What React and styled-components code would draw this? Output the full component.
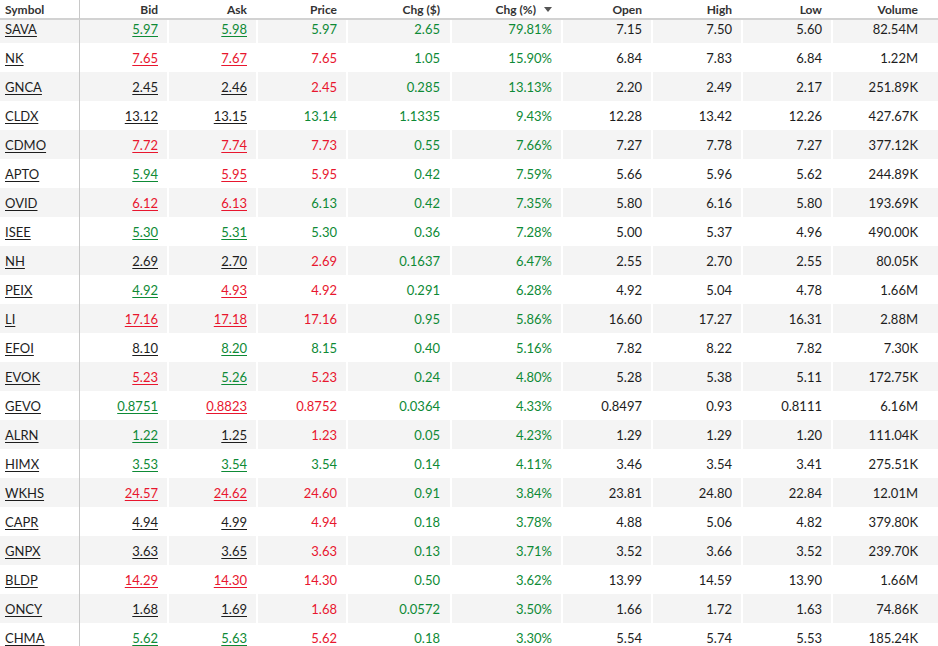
import React, { useLayoutEffect, useRef } from "react"
import styled, { createGlobalStyle } from "styled-components"

const GREEN = "#0e8a36"
const RED = "#e8162e"
const INK = "#1d1d1d"

const GlobalStyle = createGlobalStyle`
  html, body {
    margin: 0;
    padding: 0;
    background: #fff;
  }
  body {
    font-family: Lato, "Open Sans", sans-serif;
    color: ${INK};
  }
`

// g = green, r = red, k = black
const rows = [
  ["SAVA", "5.97", "g", "5.98", "g", "5.97", "g", "2.65", "79.81%", "7.15", "7.50", "5.60", "82.54M"],
  ["NK", "7.65", "r", "7.67", "r", "7.65", "r", "1.05", "15.90%", "6.84", "7.83", "6.84", "1.22M"],
  ["GNCA", "2.45", "k", "2.46", "k", "2.45", "r", "0.285", "13.13%", "2.20", "2.49", "2.17", "251.89K"],
  ["CLDX", "13.12", "k", "13.15", "k", "13.14", "g", "1.1335", "9.43%", "12.28", "13.42", "12.26", "427.67K"],
  ["CDMO", "7.72", "r", "7.74", "r", "7.73", "r", "0.55", "7.66%", "7.27", "7.78", "7.27", "377.12K"],
  ["APTO", "5.94", "g", "5.95", "r", "5.95", "r", "0.42", "7.59%", "5.66", "5.96", "5.62", "244.89K"],
  ["OVID", "6.12", "r", "6.13", "r", "6.13", "g", "0.42", "7.35%", "5.80", "6.16", "5.80", "193.69K"],
  ["ISEE", "5.30", "g", "5.31", "g", "5.30", "g", "0.36", "7.28%", "5.00", "5.37", "4.96", "490.00K"],
  ["NH", "2.69", "k", "2.70", "k", "2.69", "r", "0.1637", "6.47%", "2.55", "2.70", "2.55", "80.05K"],
  ["PEIX", "4.92", "g", "4.93", "r", "4.92", "r", "0.291", "6.28%", "4.92", "5.04", "4.78", "1.66M"],
  ["LI", "17.16", "r", "17.18", "r", "17.16", "r", "0.95", "5.86%", "16.60", "17.27", "16.31", "2.88M"],
  ["EFOI", "8.10", "k", "8.20", "g", "8.15", "g", "0.40", "5.16%", "7.82", "8.22", "7.82", "7.30K"],
  ["EVOK", "5.23", "r", "5.26", "g", "5.23", "r", "0.24", "4.80%", "5.28", "5.38", "5.11", "172.75K"],
  ["GEVO", "0.8751", "g", "0.8823", "r", "0.8752", "r", "0.0364", "4.33%", "0.8497", "0.93", "0.8111", "6.16M"],
  ["ALRN", "1.22", "g", "1.25", "k", "1.23", "r", "0.05", "4.23%", "1.29", "1.29", "1.20", "111.04K"],
  ["HIMX", "3.53", "g", "3.54", "g", "3.54", "g", "0.14", "4.11%", "3.46", "3.54", "3.41", "275.51K"],
  ["WKHS", "24.57", "r", "24.62", "r", "24.60", "r", "0.91", "3.84%", "23.81", "24.80", "22.84", "12.01M"],
  ["CAPR", "4.94", "k", "4.99", "k", "4.94", "r", "0.18", "3.78%", "4.88", "5.06", "4.82", "379.80K"],
  ["GNPX", "3.63", "k", "3.65", "k", "3.63", "r", "0.13", "3.71%", "3.52", "3.66", "3.52", "239.70K"],
  ["BLDP", "14.29", "r", "14.30", "r", "14.30", "r", "0.50", "3.62%", "13.99", "14.59", "13.90", "1.66M"],
  ["ONCY", "1.68", "k", "1.69", "k", "1.68", "r", "0.0572", "3.50%", "1.66", "1.72", "1.63", "74.86K"],
  ["CHMA", "5.62", "g", "5.63", "g", "5.62", "r", "0.18", "3.30%", "5.54", "5.74", "5.53", "185.24K"],
]

const columns = [
  { key: "symbol", label: "Symbol", width: 80 },
  { key: "bid", label: "Bid", width: 87 },
  { key: "ask", label: "Ask", width: 89 },
  { key: "price", label: "Price", width: 90 },
  { key: "chg", label: "Chg ($)", width: 104, pr: 10 },
  { key: "pct", label: "Chg (%)", width: 111, sorted: true },
  { key: "open", label: "Open", width: 90 },
  { key: "high", label: "High", width: 90 },
  { key: "low", label: "Low", width: 90 },
  { key: "volume", label: "Volume", width: 107, pr: 20 },
]

const toneColor = (t) => (t === "g" ? GREEN : t === "r" ? RED : INK)

const Scroller = styled.div`
  height: 100vh;
  overflow-y: auto;
  overflow-x: hidden;
  scrollbar-width: none;
  &::-webkit-scrollbar {
    display: none;
  }
`

const Table = styled.table`
  width: 938px;
  table-layout: fixed;
  border-collapse: separate;
  border-spacing: 0;
  font-size: 13px;
`

const HeadCell = styled.th`
  position: sticky;
  top: 0;
  z-index: 2;
  height: 18px;
  padding: 0 ${(p) => p.$pr}px 0 ${(p) => (p.$first ? 5 : 0)}px;
  background: #fff;
  border-bottom: 2px solid #d2d2d2;
  border-right: ${(p) => (p.$first ? "1px solid #c8c8c8" : "0")};
  text-align: ${(p) => (p.$first ? "left" : "right")};
  font-size: 12px;
  font-weight: 700;
  color: #333;
  white-space: nowrap;
`

const Caret = styled.span`
  display: inline-block;
  margin-left: 8px;
  vertical-align: 2px;
  width: 0;
  height: 0;
  border-left: 4px solid transparent;
  border-right: 4px solid transparent;
  border-top: 5px solid #555;
`

const Row = styled.tr`
  background: ${(p) => (p.$shaded ? "#f4f4f4" : "#fff")};
`

const SymbolCell = styled.td`
  height: 29px;
  padding: 0 0 0 5px;
  border-right: 1px solid #c8c8c8;
  text-align: left;
  white-space: nowrap;
`

const Cell = styled.td`
  height: 29px;
  padding: 0 ${(p) => p.$pr}px 0 0;
  border-left: ${(p) => (p.$gap ? "2px solid #fff" : "0")};
  text-align: right;
  color: ${(p) => toneColor(p.$tone)};
  white-space: nowrap;
`

const Link = styled.a`
  color: ${(p) => toneColor(p.$tone)};
  text-decoration: underline;
  text-decoration-thickness: 1px;
  text-underline-offset: 2px;
  cursor: pointer;
`

export default function App() {
  const ref = useRef(null)

  useLayoutEffect(() => {
    if (ref.current) ref.current.scrollTop = 6
  }, [])

  return (
    <>
      <GlobalStyle />
      <Scroller ref={ref}>
        <Table>
          <colgroup>
            {columns.map((c) => (
              <col key={c.key} style={{ width: c.width }} />
            ))}
          </colgroup>
          <thead>
            <tr>
              {columns.map((c, i) => (
                <HeadCell key={c.key} $first={i === 0} $pr={c.pr || 9}>
                  {c.label}
                  {c.sorted && <Caret />}
                </HeadCell>
              ))}
            </tr>
          </thead>
          <tbody>
            {rows.map((r, i) => {
              const [sym, bid, bidT, ask, askT, price, priceT, chg, pct, open, high, low, vol] = r
              return (
                <Row key={sym} $shaded={i % 2 === 0}>
                  <SymbolCell>
                    <Link $tone="k">{sym}</Link>
                  </SymbolCell>
                  <Cell $pr={9} $tone={bidT}>
                    <Link $tone={bidT}>{bid}</Link>
                  </Cell>
                  <Cell $gap $pr={9} $tone={askT}>
                    <Link $tone={askT}>{ask}</Link>
                  </Cell>
                  <Cell $gap $pr={9} $tone={priceT}>{price}</Cell>
                  <Cell $gap $pr={10} $tone="g">{chg}</Cell>
                  <Cell $gap $pr={9} $tone="g">{pct}</Cell>
                  <Cell $gap $pr={9} $tone="k">{open}</Cell>
                  <Cell $gap $pr={9} $tone="k">{high}</Cell>
                  <Cell $gap $pr={9} $tone="k">{low}</Cell>
                  <Cell $gap $pr={20} $tone="k">{vol}</Cell>
                </Row>
              )
            })}
          </tbody>
        </Table>
      </Scroller>
    </>
  )
}
